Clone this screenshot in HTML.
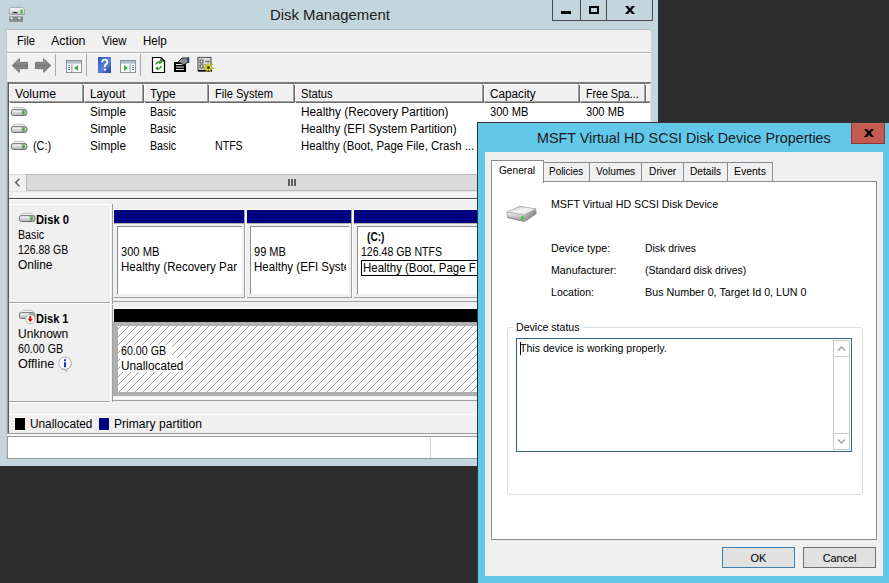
<!DOCTYPE html>
<html><head><meta charset="utf-8">
<style>
*{box-sizing:border-box;margin:0;padding:0}
html,body{width:889px;height:583px;overflow:hidden;background:#2d2d2d}
body{position:relative;font-family:"Liberation Sans",sans-serif;font-size:12px;color:#000}
.a{position:absolute}
.t{position:absolute;white-space:nowrap;line-height:14px;transform-origin:0 0}
.d{font-size:11px;line-height:13px}
/* main window */
#win{left:0;top:0;width:658px;height:466px;background:#c3d6dd}
#client{left:7px;top:30px;width:644px;height:429px;background:#f0f0f0;box-shadow:0 -1px 0 #b4bec8,-1px 0 0 #bccad2}
#title{left:0;top:5px;width:658px;text-align:center;font-size:16px;line-height:20px;color:#1a1a1a}
.cap{top:0;height:21px;border:1px solid #4a4a4a;border-top:none}
/* list */
#list{left:7px;top:82px;width:644px;height:110px;background:#fff;border:1px solid #e4e4e4;border-left:2px solid #6e6e6e;border-top:2px solid #7a7a7a}
.hd{top:84px;height:18px;background:#f0f0f0;border-right:1px solid #a0a0a0;border-bottom:1px solid #a0a0a0;box-shadow:inset 1px 1px 0 #fff, 1px 1px 0 #696969}
/* dialog */
#dlg{left:477px;top:122px;width:420px;height:470px;background:#63c7ea;border:1px solid #33333a}
#dcl{left:485px;top:152px;width:398px;height:424px;background:#f0f0f0}
#page{left:491px;top:181px;width:386px;height:359px;background:#fff;border:1px solid #898c95}
.tab{top:162px;height:19px;background:#f0f0f0;border:1px solid #898c95;border-bottom:none;text-align:center;line-height:20px}
.pin{top:226px;height:68px;background:#fff;border-left:1px solid #8c8c8c;border-top:1px solid #8c8c8c}
.clip{top:227px;height:67px;overflow:hidden}
.lbl{left:9px;width:102px;height:100px;border-top:1px solid #fff;border-right:1px solid #fff;border-bottom:1px solid #fff;box-shadow:inset 0 -1px 0 #a0a0a0}
.btn{height:21px;border:1px solid #707070;background:#e1e1e1;text-align:center;line-height:19px;padding-top:1px;font-size:11px}
</style></head><body>

<!-- ============ MAIN WINDOW ============ -->
<div id="win" class="a"></div>
<div class="t" style="left:269.5px;top:5px;font-size:15px;line-height:20px;color:#1a1a1a;transform:scaleX(0.991)">Disk Management</div>
<svg class="a" style="left:8px;top:6px" width="18" height="17" viewBox="0 0 18 17">
<defs><linearGradient id="ai" x1="0" y1="0" x2="0" y2="1"><stop offset="0" stop-color="#fafafa"/><stop offset="1" stop-color="#c2c2ca"/></linearGradient></defs>
<path d="M2.4 1.4 L14.6 1.4 L16.6 3 L16.6 8.6 L1.2 8.6 L1.2 3 Z" fill="url(#ai)" stroke="#9a9aa2" stroke-width=".8"/>
<path d="M3.6 7.2 Q7 4.2 10.6 7.2 Z" fill="#2a2a2a"/><rect x="12.6" y="3.6" width="2" height="4" fill="#28c41c"/>
<rect x="1.2" y="9.2" width="13.8" height="1.2" fill="#d4dce0"/>
<rect x="1.2" y="10.4" width="13.8" height="5.4" fill="#80898e"/><circle cx="3.6" cy="12.2" r="1.1" fill="#e4e8ea"/><circle cx="11.4" cy="12.2" r="1.1" fill="#e4e8ea"/>
</svg>
<div class="a cap" style="left:552px;width:29px"></div>
<div class="a cap" style="left:580px;width:27px"></div>
<div class="a cap" style="left:606px;width:47px"></div>
<div class="a" style="left:561px;top:11px;width:10px;height:3px;background:#000"></div>
<div class="a" style="left:589px;top:6px;width:10px;height:8px;border:2px solid #000"></div>
<svg class="a" style="left:625px;top:6px" width="10" height="8" viewBox="0 0 9.4 8" preserveAspectRatio="none"><path d="M0 0H2.9L4.7 2.5L6.5 0H9.4L6.2 4L9.4 8H6.5L4.7 5.5L2.9 8H0L3.2 4Z" fill="#000"/></svg>

<div id="client" class="a"></div>
<!-- menu -->
<div class="t" style="left:17px;top:34px;transform:scaleX(0.931)">File</div>
<div class="t" style="left:51px;top:34px;transform:scaleX(1.034)">Action</div>
<div class="t" style="left:102px;top:34px;transform:scaleX(0.950)">View</div>
<div class="t" style="left:143px;top:34px;transform:scaleX(0.962)">Help</div>
<div class="a" style="left:7px;top:52px;width:644px;height:1px;background:#b4b4b4"></div>
<div class="a" style="left:7px;top:53px;width:644px;height:1px;background:#fafafa"></div>

<!-- toolbar -->
<svg class="a" style="left:8px;top:54px" width="214" height="24" viewBox="0 0 214 24">
<defs><linearGradient id="ar" x1="0" y1="0" x2="0" y2="1"><stop offset="0" stop-color="#a4a4a4"/><stop offset=".5" stop-color="#7c7c7c"/><stop offset="1" stop-color="#a0a0a0"/></linearGradient>
<linearGradient id="hb" x1="0" y1="0" x2="1" y2="1"><stop offset="0" stop-color="#2a56c6"/><stop offset=".55" stop-color="#5b7fdc"/><stop offset="1" stop-color="#24409a"/></linearGradient></defs>
<!-- back / forward -->
<path d="M4.2 11.5 L11.3 4.6 L11.3 8.4 L19.6 8.4 L19.6 14.6 L11.3 14.6 L11.3 18.4 Z" fill="url(#ar)" stroke="#767676" stroke-width="1" stroke-linejoin="round"/>
<path d="M42.8 11.5 L35.7 4.6 L35.7 8.4 L27.4 8.4 L27.4 14.6 L35.7 14.6 L35.7 18.4 Z" fill="url(#ar)" stroke="#767676" stroke-width="1" stroke-linejoin="round"/>
<rect x="47" y="0" width="1" height="22" fill="#a9a9a9"/>
<!-- show/hide tree -->
<rect x="58.5" y="6.5" width="15" height="12" fill="#fff" stroke="#8a929c"/><rect x="59" y="7" width="14" height="2.6" fill="#b4bcc6"/><rect x="63.4" y="10" width="1" height="8" fill="#8a929c"/>
<path d="M60 11.5h2M60 13.5h2M60 15.5h2" stroke="#3f7fd6" stroke-width="1"/><path d="M70 11 L70 17 L66 14 Z" fill="#3cb034"/>
<rect x="78" y="0" width="1" height="22" fill="#a9a9a9"/>
<!-- help -->
<rect x="90" y="3" width="13" height="16" fill="url(#hb)"/>
<path d="M94.2 8.2 Q94.2 5.6 96.7 5.6 Q99.3 5.6 99.3 8 Q99.3 9.6 97.8 10.6 Q96.8 11.4 96.8 13" fill="none" stroke="#fff" stroke-width="1.9"/><rect x="95.8" y="14.6" width="2" height="2" fill="#fff"/>
<!-- action pane -->
<rect x="112.5" y="6.5" width="15" height="12" fill="#fff" stroke="#8a929c"/><rect x="113" y="7" width="14" height="2.6" fill="#b4bcc6"/><rect x="121.6" y="10" width="1" height="8" fill="#8a929c"/>
<path d="M124 11.5h2M124 13.5h2M124 15.5h2" stroke="#3f7fd6" stroke-width="1"/><path d="M116 11 L116 17 L120 14 Z" fill="#3cb034"/>
<rect x="132" y="0" width="1" height="22" fill="#a9a9a9"/>
<!-- refresh -->
<path d="M144.5 3.5 L153 3.5 L156.5 7 L156.5 18.5 L144.5 18.5 Z" fill="#fff" stroke="#000" stroke-width="1.2"/><path d="M153 3.5 L153 7 L156.5 7" fill="none" stroke="#000" stroke-width="1"/>
<path d="M148 10.5 A3 3 0 0 1 152.6 8.4" fill="none" stroke="#2a9a2a" stroke-width="1.6"/><path d="M151.2 6.4 L154.2 8.6 L151.2 10.6 Z" fill="#2a9a2a"/>
<path d="M153.2 12 A3 3 0 0 1 148.6 14.2" fill="none" stroke="#2a9a2a" stroke-width="1.6"/><path d="M150 12.2 L147 14.2 L150 16.4 Z" fill="#2a9a2a"/>
<!-- properties -->
<rect x="166" y="8" width="12" height="10" fill="#000"/><path d="M168 10.5h8M168 13h8M168 15.5h8" stroke="#e8e8e8" stroke-width="1"/>
<path d="M170 8 L174 4 L180 4 L180 8 L176 11 Z" fill="#8c8c8c" stroke="#000" stroke-width=".8"/><rect x="180" y="3" width="1.2" height="6" fill="#1c2fb0"/>
<!-- settings -->
<rect x="190" y="3.5" width="13" height="13" fill="#e4e4e4" stroke="#5a5a5a" stroke-width="1.2"/><rect x="190" y="16" width="14" height="1.6" fill="#000"/>
<rect x="192" y="6" width="3" height="3" fill="#fff" stroke="#000" stroke-width=".7"/><rect x="192" y="11" width="3" height="3" fill="#fff" stroke="#000" stroke-width=".7"/><path d="M197 7.5h5" stroke="#707070" stroke-width="1.4"/>
<path d="M200 8.5 L201.3 11.2 L204.6 10 L203 12.8 L205.6 14.6 L202.6 15 L202.8 18 L200.4 16 L198 18 L198.2 15 L195.4 14.4 L197.8 12.8 L196.4 10 L199.2 11.2 Z" fill="#f2e21c" stroke="#8a7a00" stroke-width=".5"/>
<circle cx="200.4" cy="13.6" r="1.5" fill="#2a2a2a"/>
</svg>

<!-- list view -->
<div id="list" class="a"></div>
<div class="a hd" style="left:9px;width:74px"></div>
<div class="a hd" style="left:84px;width:59px"></div>
<div class="a hd" style="left:144px;width:64px"></div>
<div class="a hd" style="left:209px;width:85px"></div>
<div class="a hd" style="left:295px;width:188px"></div>
<div class="a hd" style="left:484px;width:95px"></div>
<div class="a hd" style="left:580px;width:65px"></div>
<div class="a hd" style="left:646px;width:4px;border-right:none;box-shadow:inset 1px 1px 0 #fff,0 1px 0 #696969"></div>
<div class="t" style="left:15px;top:87px;transform:scaleX(1.024)">Volume</div>
<div class="t" style="left:90px;top:87px;transform:scaleX(0.978)">Layout</div>
<div class="t" style="left:150px;top:87px;transform:scaleX(0.980)">Type</div>
<div class="t" style="left:215px;top:87px;transform:scaleX(0.925)">File System</div>
<div class="t" style="left:301px;top:87px;transform:scaleX(0.931)">Status</div>
<div class="t" style="left:490px;top:87px;transform:scaleX(0.977)">Capacity</div>
<div class="t" style="left:586px;top:87px;transform:scaleX(0.886)">Free Spa...</div>

<!-- list rows -->
<div class="t" style="left:90px;top:105px;transform:scaleX(0.981)">Simple</div><div class="t" style="left:150px;top:105px;transform:scaleX(0.889)">Basic</div>
<div class="t" style="left:301px;top:105px;transform:scaleX(0.983)">Healthy (Recovery Partition)</div><div class="t" style="left:490px;top:105px;transform:scaleX(0.926)">300 MB</div><div class="t" style="left:586px;top:105px;transform:scaleX(0.926)">300 MB</div>
<div class="t" style="left:90px;top:122px;transform:scaleX(0.981)">Simple</div><div class="t" style="left:150px;top:122px;transform:scaleX(0.889)">Basic</div>
<div class="t" style="left:301px;top:122px;transform:scaleX(0.964)">Healthy (EFI System Partition)</div>
<div class="t" style="left:33px;top:139px;transform:scaleX(0.905)">(C:)</div>
<div class="t" style="left:90px;top:139px;transform:scaleX(0.981)">Simple</div><div class="t" style="left:150px;top:139px;transform:scaleX(0.889)">Basic</div><div class="t" style="left:215px;top:139px;transform:scaleX(0.884)">NTFS</div>
<div class="t" style="left:301px;top:139px;transform:scaleX(0.951)">Healthy (Boot, Page File, Crash ...</div>
<!-- volume icons -->
<svg class="a" style="left:10px;top:106px" width="18" height="46" viewBox="0 0 18 46">
<defs><linearGradient id="vg" x1="0" y1="0" x2="0" y2="1"><stop offset="0" stop-color="#ececf0"/><stop offset=".5" stop-color="#d4d4dc"/><stop offset="1" stop-color="#b4b4bc"/></linearGradient></defs>
<g id="vi"><path d="M4.6 1.3 L13.6 1.3 L16.4 4.2 L1.6 4.2 Z" fill="#f2f2f2" stroke="#b4b4b8" stroke-width=".8"/><rect x="1.3" y="3.7" width="15.6" height="5.8" rx="2.2" fill="url(#vg)" stroke="#6c6c74" stroke-width="1"/><rect x="2.6" y="4.5" width="9" height="1.4" fill="#f4f4f8" opacity=".8"/><rect x="12.4" y="5" width="2.2" height="3.3" fill="#34b424"/><rect x="12" y="4.7" width="3" height="3.9" fill="none" stroke="#809080" stroke-width=".5"/></g>
<use href="#vi" y="17"/><use href="#vi" y="34"/></svg>
<!-- h scrollbar -->
<div class="a" style="left:9px;top:174px;width:641px;height:17px;background:#f0f0f0;border-top:1px solid #dadada"></div>
<div class="a" style="left:26px;top:174px;width:600px;height:17px;background:#dadada;border:1px solid #b8b8b8"></div>
<svg class="a" style="left:13px;top:178px" width="8" height="9" viewBox="0 0 8 9"><path d="M6.4 0.8 L2.6 4.5 L6.4 8.2" fill="none" stroke="#505050" stroke-width="1.2"/></svg>
<div class="a" style="left:288px;top:179px;width:2px;height:7px;background:#606060;box-shadow:3px 0 0 #606060,6px 0 0 #606060"></div>

<!-- splitter + graphical view -->
<div class="a" style="left:9px;top:193px;width:642px;height:1px;background:#fcfcfc"></div>
<div class="a" style="left:7px;top:82px;width:1px;height:352px;background:#9a9a9a"></div>
<div class="a" style="left:8px;top:82px;width:1px;height:352px;background:#5a5a5a"></div>
<div class="a" style="left:8px;top:198px;width:643px;height:1px;background:#505050"></div>
<div class="a" style="left:9px;top:199px;width:642px;height:1px;background:#fafafa"></div>

<!-- Disk 0 -->
<div class="a lbl" style="top:204px"></div>
<div class="a" style="left:112px;top:204px;width:1px;height:100px;background:#a0a0a0"></div>
<div class="a" style="left:112px;top:301px;width:539px;height:1px;background:#a0a0a0"></div>
<div class="t" style="left:36px;top:213px;font-weight:bold;transform:scaleX(0.933)">Disk 0</div>
<div class="t" style="left:18px;top:228px;transform:scaleX(0.889)">Basic</div>
<div class="t" style="left:18px;top:243px;transform:scaleX(0.877)">126.88 GB</div>
<div class="t" style="left:18px;top:258px;transform:scaleX(0.995)">Online</div>
<div class="a" style="left:114px;top:209px;width:130px;height:1px;background:#fff"></div>
<div class="a" style="left:114px;top:210px;width:130px;height:13px;background:#000080"></div>
<div class="a" style="left:114px;top:223px;width:130px;height:1px;background:#b4b4ac"></div>
<div class="a" style="left:114px;top:297px;width:131px;height:1px;background:#a0a0a0"></div>
<div class="a" style="left:244px;top:210px;width:1px;height:88px;background:#a0a0a0"></div>
<div class="a" style="left:245px;top:210px;width:1px;height:88px;background:#fafafa"></div>
<div class="a pin" style="left:117px;width:125px"></div>
<div class="a" style="left:247px;top:209px;width:104px;height:1px;background:#fff"></div>
<div class="a" style="left:247px;top:210px;width:104px;height:13px;background:#000080"></div>
<div class="a" style="left:247px;top:223px;width:104px;height:1px;background:#b4b4ac"></div>
<div class="a" style="left:247px;top:297px;width:105px;height:1px;background:#a0a0a0"></div>
<div class="a" style="left:351px;top:210px;width:1px;height:88px;background:#a0a0a0"></div>
<div class="a" style="left:352px;top:210px;width:1px;height:88px;background:#fafafa"></div>
<div class="a pin" style="left:250px;width:99px"></div>
<div class="a" style="left:354px;top:209px;width:298px;height:1px;background:#fff"></div>
<div class="a" style="left:354px;top:210px;width:298px;height:13px;background:#000080"></div>
<div class="a" style="left:354px;top:223px;width:298px;height:1px;background:#b4b4ac"></div>
<div class="a" style="left:354px;top:297px;width:299px;height:1px;background:#a0a0a0"></div>
<div class="a" style="left:652px;top:210px;width:1px;height:88px;background:#a0a0a0"></div>
<div class="a" style="left:653px;top:210px;width:1px;height:88px;background:#fafafa"></div>
<div class="a pin" style="left:357px;width:293px"></div>
<div class="a clip" style="left:118px;width:123px"><div class="t" style="left:3px;top:18px;transform:scaleX(0.926)">300 MB</div><div class="t" style="left:3px;top:33px;transform:scaleX(0.961)">Healthy (Recovery Par</div></div>
<div class="a clip" style="left:251px;width:95px"><div class="t" style="left:3px;top:18px;transform:scaleX(0.920)">99 MB</div><div class="t" style="left:3px;top:33px;transform:scaleX(0.962)">Healthy (EFI Syste</div></div>
<div class="a clip" style="left:358px;width:294px"><div class="t" style="left:9px;top:3px;font-weight:bold;transform:scaleX(0.847)">(C:)</div><div class="t" style="left:3px;top:18px;transform:scaleX(0.880)">126.48 GB NTFS</div>
<div class="a" style="left:3px;top:33px;width:290px;height:16px;border:1px solid #000"></div><div class="t" style="left:5px;top:34px;transform:scaleX(0.955)">Healthy (Boot, Page F</div></div>

<!-- disk label icons -->
<svg class="a" style="left:18px;top:212px" width="18" height="11" viewBox="0 0 18 11"><use href="#vi"/></svg>
<svg class="a" style="left:18px;top:309px" width="18" height="16" viewBox="0 0 18 16"><use href="#vi"/>
<circle cx="12.3" cy="10" r="4.6" fill="#fff" stroke="#9a9a9a" stroke-width=".8"/><path d="M11.3 6.8 h2 v3 h1.8 L12.3 13.2 L9.5 9.8 h1.8 Z" fill="#d01818"/></svg>
<svg class="a" style="left:56px;top:356px" width="18" height="17" viewBox="0 0 18 17">
<path d="M9 1 A6.4 6.4 0 1 1 5.4 12.7 L9.6 12.9 L10.6 15.8 L11 12.6 A6.4 6.4 0 0 0 9 1 Z" fill="#fff" stroke="#a4a8ac" stroke-width=".9"/>
<circle cx="9" cy="7.2" r="6.2" fill="#fff" stroke="#a8acb0" stroke-width=".9"/>
<path d="M9.4 12.6 L10.6 15.6 L11.4 12" fill="#fff" stroke="#a8acb0" stroke-width=".8"/>
<rect x="8" y="3.2" width="2" height="2" fill="#1838c8"/><rect x="8" y="6.2" width="2" height="5" fill="#1838c8"/></svg>
<!-- Disk 1 -->
<div class="a lbl" style="top:303px"></div>
<div class="a" style="left:112px;top:305px;width:1px;height:97px;background:#a0a0a0"></div>
<div class="t" style="left:36px;top:312px;font-weight:bold;transform:scaleX(0.919)">Disk 1</div>
<div class="t" style="left:18px;top:327px;transform:scaleX(1.005)">Unknown</div>
<div class="t" style="left:18px;top:342px;transform:scaleX(0.888)">60.00 GB</div>
<div class="t" style="left:18px;top:357px;transform:scaleX(1.053)">Offline</div>
<div class="a" style="left:114px;top:308px;width:537px;height:1px;background:#fff"></div>
<div class="a" style="left:114px;top:309px;width:537px;height:13px;background:#000"></div>
<svg class="a" style="left:113px;top:322px" width="538" height="78" viewBox="0 0 538 78">
<defs><pattern id="hz" width="8" height="8" patternUnits="userSpaceOnUse" patternTransform="translate(4 0)"><rect width="8" height="8" fill="#fff"/><path d="M-1 9 L9 -1 M-5 5 L5 -5 M3 13 L13 3" stroke="#8c8c8c" stroke-width="0.8"/></pattern></defs>
<rect x="0" y="0" width="538" height="74" fill="#b0b0b0"/><rect x="5" y="4" width="533" height="66" fill="url(#hz)"/><rect x="0" y="75" width="538" height="2.4" fill="#fbfbfb"/></svg>
<div class="a" style="left:120px;top:345px;width:52px;height:14px;background:#fff"></div><div class="a" style="left:120px;top:358px;width:65px;height:14px;background:#fff"></div>
<div class="t" style="left:121px;top:344px;transform:scaleX(0.888)">60.00 GB</div>
<div class="t" style="left:121px;top:359px;transform:scaleX(0.985)">Unallocated</div>
<div class="a" style="left:112px;top:400px;width:539px;height:1px;background:#a0a0a0"></div>

<!-- legend + status -->
<div class="a" style="left:9px;top:414px;width:642px;height:1px;background:#fbfbfb"></div>
<div class="a" style="left:8px;top:433px;width:643px;height:1px;background:#9a9a9a"></div>
<div class="a" style="left:7px;top:434px;width:644px;height:1px;background:#fafafa"></div>
<div class="a" style="left:14px;top:417px;width:12px;height:14px;background:#fafafa"></div>
<div class="a" style="left:15px;top:418px;width:10px;height:12px;background:#000"></div>
<div class="t" style="left:30px;top:417px;transform:scaleX(0.985)">Unallocated</div>
<div class="a" style="left:98px;top:417px;width:12px;height:14px;background:#fafafa"></div>
<div class="a" style="left:99px;top:418px;width:10px;height:12px;background:#000080"></div>
<div class="t" style="left:114px;top:417px;transform:scaleX(1.007)">Primary partition</div>
<div class="a" style="left:7px;top:436px;width:644px;height:23px;background:#fff;border:1px solid #9c9c9c;border-right-color:#d8d8d8"></div>
<div class="a" style="left:430px;top:437px;width:1px;height:21px;background:#d4d4d4"></div>

<!-- ============ DIALOG ============ -->
<div id="dlg" class="a"></div>
<div class="t" style="left:537px;top:128px;font-size:15px;line-height:20px;color:#1a1a1a;transform:scaleX(0.954)">MSFT Virtual HD SCSI Disk Device Properties</div>
<div class="a" style="left:851px;top:123px;width:34px;height:21px;background:#c45a50;border:1px solid #8a3a32;border-top:none"></div>
<svg class="a" style="left:864px;top:129px" width="10" height="8" viewBox="0 0 9.4 8" preserveAspectRatio="none"><path d="M0 0H2.9L4.7 2.5L6.5 0H9.4L6.2 4L9.4 8H6.5L4.7 5.5L2.9 8H0L3.2 4Z" fill="#000"/></svg>
<div id="dcl" class="a"></div>
<div id="page" class="a"></div>
<!-- tabs -->
<div class="a tab" style="left:543px;width:47px"></div>
<div class="a tab" style="left:589px;width:53px"></div>
<div class="a tab" style="left:641px;width:43px"></div>
<div class="a tab" style="left:683px;width:45px"></div>
<div class="a tab" style="left:727px;width:46px"></div>
<div class="a" style="left:491px;top:160px;width:53px;height:23px;background:#fff;border:1px solid #898c95;border-bottom:none"></div>
<div class="t d" style="left:499px;top:164px;transform:scaleX(0.920)">General</div>
<div class="t d" style="left:549px;top:165px;transform:scaleX(0.904)">Policies</div>
<div class="t d" style="left:596px;top:165px;transform:scaleX(0.930)">Volumes</div>
<div class="t d" style="left:649px;top:165px;transform:scaleX(0.929)">Driver</div>
<div class="t d" style="left:690px;top:165px;transform:scaleX(0.922)">Details</div>
<div class="t d" style="left:734px;top:165px;transform:scaleX(0.951)">Events</div>
<!-- drive icon -->
<svg class="a" style="left:505px;top:205px" width="34" height="18" viewBox="0 0 34 18">
<defs><linearGradient id="g1" x1="0" y1="0" x2="1" y2="1"><stop offset="0" stop-color="#c8c8c8"/><stop offset=".5" stop-color="#f4f4f4"/><stop offset="1" stop-color="#d2d2d2"/></linearGradient>
<linearGradient id="g2" x1="0" y1="0" x2="0" y2="1"><stop offset="0" stop-color="#f0f0f4"/><stop offset=".5" stop-color="#c4c4cc"/><stop offset="1" stop-color="#9a9a9a"/></linearGradient>
<linearGradient id="g3" x1="0" y1="0" x2="1" y2="1"><stop offset="0" stop-color="#f2f2f2"/><stop offset=".35" stop-color="#b0b0b0"/><stop offset="1" stop-color="#5e5e5e"/></linearGradient></defs>
<path d="M1.6 7 L15 1 L31 3.5 L31.6 8.4 L19.7 16.7 L2.2 12.6 Z" fill="#9c9c9c"/><path d="M2.4 12.6 L19.6 16.6 L31.5 8.5" fill="none" stroke="#7c7c7c" stroke-width=".7"/>
<path d="M2.2 6.8 L15.1 1.6 L30.4 3.9 L19 9.9 Z" fill="url(#g1)" stroke="#b4b4b4" stroke-width=".6"/>
<path d="M2.2 7.4 L18.8 10.4 L19.2 15.8 L2.8 12 Z" fill="url(#g2)"/>
<path d="M19.2 10.2 L30.6 4.2 L31 8.2 L19.6 15.9 Z" fill="url(#g3)"/>
<rect x="16.3" y="11.3" width="2" height="3.6" fill="#2fc21c"/>
</svg>
<div class="t d" style="left:551px;top:198px;transform:scaleX(0.968)">MSFT Virtual HD SCSI Disk Device</div>
<div class="t d" style="left:551px;top:242px;transform:scaleX(0.979)">Device type:</div>
<div class="t d" style="left:551px;top:264px;transform:scaleX(0.965)">Manufacturer:</div>
<div class="t d" style="left:551px;top:286px;transform:scaleX(0.963)">Location:</div>
<div class="t d" style="left:645px;top:242px;transform:scaleX(0.948)">Disk drives</div>
<div class="t d" style="left:645px;top:264px;transform:scaleX(0.946)">(Standard disk drives)</div>
<div class="t d" style="left:645px;top:286px;transform:scaleX(0.976)">Bus Number 0, Target Id 0, LUN 0</div>
<!-- group box -->
<div class="a" style="left:507px;top:327px;width:356px;height:168px;border:1px solid #d5dfe5;border-radius:3px"></div>
<div class="a" style="left:513px;top:321px;width:69px;height:13px;background:#fff"></div>
<div class="t d" style="left:516px;top:321px;transform:scaleX(0.962)">Device status</div>
<div class="a" style="left:516px;top:338px;width:336px;height:114px;background:#fff;border:1px solid #2c628b"></div>
<div class="a" style="left:520px;top:342px;width:1px;height:13px;background:#000"></div>
<div class="t d" style="left:520px;top:342px;transform:scaleX(0.961)">This device is working properly.</div>
<!-- v scrollbar -->
<div class="a" style="left:833px;top:340px;width:17px;height:110px;background:#fff;border:1px solid #cdcdcd"></div>
<div class="a" style="left:833px;top:340px;width:17px;height:17px;border:1px solid #cdcdcd"></div>
<div class="a" style="left:833px;top:433px;width:17px;height:17px;border:1px solid #cdcdcd"></div>
<svg class="a" style="left:837px;top:345px" width="9" height="7" viewBox="0 0 9 7"><path d="M1 5.5 L4.5 2 L8 5.5" fill="none" stroke="#9a9a9a" stroke-width="1.3"/></svg>
<svg class="a" style="left:837px;top:438px" width="9" height="7" viewBox="0 0 9 7"><path d="M1 1.5 L4.5 5 L8 1.5" fill="none" stroke="#9a9a9a" stroke-width="1.3"/></svg>

<div class="a btn" style="left:722px;top:547px;width:73px;border-color:#3c7fb1">OK</div>
<div class="a btn" style="left:803px;top:547px;width:73px;letter-spacing:-0.15px">Cancel</div>
</body></html>
